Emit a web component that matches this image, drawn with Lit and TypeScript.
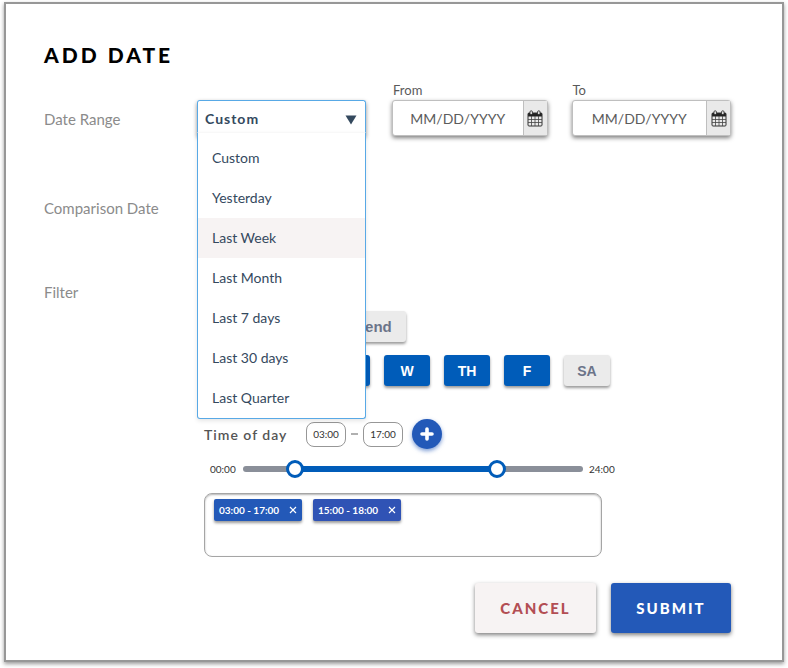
import { LitElement, html, css } from "lit";
import { customElement, state } from "lit/decorators.js";
import { classMap } from "lit/directives/class-map.js";
import { styleMap } from "lit/directives/style-map.js";

const RANGES = ["Custom", "Yesterday", "Last Week", "Last Month", "Last 7 days", "Last 30 days", "Last Quarter"];
const DAYS = ["S", "M", "T", "W", "TH", "F", "SA"];
const DAY_MINUTES = 1440;

const calendarIcon = html`<svg class="calendar" viewBox="0 0 16 17" aria-hidden="true">
  <path d="M1 3h14v3.5H1z" fill="#222" />
  <rect x="1" y="3" width="14" height="13" rx="1" fill="none" stroke="#333" />
  <path d="M1 9.5h14M1 12.5h14M4.5 6v10M8 6v10M11.5 6v10" stroke="#444" fill="none" stroke-width=".8" />
  <rect x="3" y=".8" width="2.4" height="3.8" rx="1.1" fill="#eee" stroke="#222" stroke-width=".8" />
  <rect x="10.6" y=".8" width="2.4" height="3.8" rx="1.1" fill="#eee" stroke="#222" stroke-width=".8" />
</svg>`;

@customElement("app-root")
export class AppRoot extends LitElement {
  @state() private range = "Custom";
  @state() private highlighted = "Last Week";
  @state() private open = true;
  @state() private activeDays = new Set(["M", "T", "W", "TH", "F"]);
  @state() private from = 192;
  @state() private to = 1096;
  @state() private slots = ["03:00 - 17:00", "15:00 - 18:00"];

  static styles = css`
    :host {
      display: block;
      padding: 2px 4px 6px;
      background: #fff;
      font-family: Lato, "Open Sans", sans-serif;
      color: #4a4a4a;
    }
    * { box-sizing: border-box; }
    button, input, select { font: inherit; color: inherit; margin: 0; }
    button { border: 0; padding: 0; cursor: pointer; }
    .panel {
      border: 2px solid #979797;
      box-shadow: 0 2px 4px rgba(0, 0, 0, .4);
      padding: 38px 51px 27px 38px;
      background: #fff;
    }
    .title {
      margin: 0 0 14px;
      font-size: 21px;
      line-height: 26px;
      font-weight: 900;
      letter-spacing: 3px;
      color: #000;
    }
    .row { display: grid; grid-template-columns: 153px minmax(0, 1fr); }
    .label { font-size: 15px; line-height: 20px; color: #8b8b8b; }
    .range-row { min-height: 56px; }
    .range-row .label { padding-top: 27px; }
    .compare-row { padding-top: 60px; }
    .filter-row { padding-top: 64px; }
    .dates { display: flex; }
    .dropdown {
      position: relative;
      flex: 0 0 169px;
      height: 36px;
      margin: 18px 26px 0 0;
      border: 1px solid #58a9e6;
      border-bottom: 0;
      border-radius: 3px;
      box-shadow: 0 2px 4px rgba(0, 0, 0, .45);
    }
    .dropdown select {
      appearance: none;
      width: 100%;
      height: 34px;
      padding: 0 30px 0 7px;
      border: 0;
      border-radius: 3px;
      background: #fff;
      color: #34495e;
      font-size: 14px;
      font-weight: 700;
      letter-spacing: 1px;
      outline: 0;
    }
    .arrow {
      position: absolute;
      right: 8px;
      top: 14px;
      width: 12px;
      height: 10px;
      pointer-events: none;
    }
    .menu {
      position: absolute;
      z-index: 2;
      top: 31px;
      left: -1px;
      right: -1px;
      margin: 0;
      padding: 5px 0 0;
      list-style: none;
      background: #fff;
      border: 1px solid #58a9e6;
      border-top-color: #f8f8f8;
      border-radius: 0 0 3px 3px;
      box-shadow: 0 2px 4px rgba(0, 0, 0, .1);
    }
    .option {
      padding: 0 14px;
      font-size: 14px;
      line-height: 40px;
      color: #34495e;
      cursor: pointer;
    }
    .option.lit { background: #f7f3f3; }
    .date { display: flex; flex-direction: column; flex: 156 1 0; min-width: 0; }
    .date + .date { flex-grow: 160; margin-left: 24px; }
    .date label { padding-left: 1px; font-size: 13px; line-height: 16px; color: #5a5a5a; }
    .field {
      display: flex;
      height: 36px;
      margin-top: 2px;
      border: 1px solid #bfbfbf;
      border-radius: 3px;
      background: #fff;
      box-shadow: 0 2px 4px rgba(0, 0, 0, .5);
    }
    .field input {
      flex: 1;
      min-width: 0;
      border: 0;
      padding: 0;
      background: none;
      text-align: center;
      font-size: 14px;
      outline: 0;
    }
    .field input::placeholder { color: #5c5c5c; opacity: 1; }
    .pick {
      width: 24px;
      display: grid;
      place-items: center;
      border-left: 1px solid #bfbfbf;
      background: #e9e9e9;
    }
    .calendar { width: 16px; height: 17px; }
    .filters { padding-left: 7px; padding-top: 29px; }
    .buttons { display: flex; gap: 14px; }
    .toggle {
      width: 46px;
      height: 31px;
      border-radius: 3px;
      background: #ebebeb;
      color: #6b7489;
      font: 700 14px "Liberation Sans", Arial, sans-serif;
      box-shadow: 0 2px 3px rgba(0, 0, 0, .4);
    }
    .toggle.wide { width: 94px; font-size: 15px; }
    .toggle.on { background: #005cb9; color: #fff; }
    .toggle.covered { visibility: hidden; }
    .days { margin-top: 13px; }
    .time { display: flex; align-items: center; margin-top: 32px; height: 32px; }
    .time-title { width: 102px; font-size: 14px; font-weight: 600; letter-spacing: 1px; color: #555; }
    .clock {
      width: 40px;
      height: 25px;
      padding: 0;
      border: 1px solid #979797;
      border-radius: 8px;
      text-align: center;
      font-size: 10px;
      color: #333;
      background: #fff;
    }
    .dash { width: 7px; height: 2px; margin: 0 5px; background: #b0b0b0; }
    .add {
      width: 30px;
      height: 30px;
      margin-left: 9px;
      border-radius: 50%;
      display: grid;
      place-items: center;
      background: #2359b8;
      box-shadow: 0 2px 4px rgba(35, 89, 184, .6);
    }
    .add svg { width: 14px; height: 14px; }
    .slider { display: flex; align-items: center; margin-top: 10px; height: 18px; font-size: 10px; color: #333; }
    .bound { width: 33px; }
    .slider .bound:first-child { margin-left: 6px; }
    .slider .bound:last-child { margin-left: 6px; }
    .track { position: relative; flex: 0 1 340px; height: 18px; }
    .rail, .fill { position: absolute; top: 6px; height: 6px; }
    .rail { left: 0; right: 0; border-radius: 3px; background: #8a8f99; }
    .fill { background: #005cb9; }
    .thumb {
      appearance: none;
      position: absolute;
      inset: 0;
      width: 100%;
      height: 18px;
      background: none;
      pointer-events: none;
    }
    .thumb::-webkit-slider-thumb {
      appearance: none;
      width: 18px;
      height: 18px;
      border: 3px solid #005cb9;
      border-radius: 50%;
      background: #fff;
      pointer-events: auto;
    }
    .slots {
      display: flex;
      align-items: flex-start;
      gap: 11px;
      max-width: 398px;
      min-height: 64px;
      margin-top: 15px;
      padding: 5px 9px;
      border: 1px solid #a5a5a5;
      border-radius: 8px;
      box-shadow: inset 0 1px 2px rgba(0, 0, 0, .3);
    }
    .slot {
      display: flex;
      align-items: center;
      justify-content: space-between;
      width: 88px;
      height: 22px;
      padding: 0 5px;
      border-radius: 2px;
      background: #2359b8;
      color: #fff;
      font-size: 10px;
      font-weight: 700;
      white-space: nowrap;
      box-shadow: 0 2px 3px rgba(0, 0, 0, .4);
    }
    .slot:nth-child(2) { background: #3053b5; }
    .remove { display: grid; background: none; }
    .remove svg { width: 8px; height: 8px; }
    .actions { display: flex; justify-content: flex-end; gap: 15px; margin-top: 26px; }
    .action {
      width: 121px;
      height: 50px;
      border-radius: 3px;
      font-size: 15px;
      font-weight: 900;
      letter-spacing: 2px;
      box-shadow: 0 2px 4px rgba(0, 0, 0, .5);
    }
    .cancel { background: #f7f3f3; color: #b34e53; }
    .submit { width: 120px; background: #2359b8; color: #fff; }
  `;

  private choose(range: string) {
    this.range = range;
    this.highlighted = range;
    this.open = false;
  }

  private toggleDay(day: string) {
    const next = new Set(this.activeDays);
    next.has(day) ? next.delete(day) : next.add(day);
    this.activeDays = next;
  }

  private offset(minutes: number) {
    return `calc(9px + (100% - 18px) * ${minutes / DAY_MINUTES})`;
  }

  private dateField(id: string, label: string) {
    return html`<div class="date">
      <label for=${id}>${label}</label>
      <div class="field">
        <input id=${id} type="text" placeholder="MM/DD/YYYY" />
        <button class="pick" type="button" aria-label="Pick ${label} date">${calendarIcon}</button>
      </div>
    </div>`;
  }

  render() {
    return html`<form class="panel" @submit=${(e: Event) => e.preventDefault()}>
      <h1 class="title">ADD DATE</h1>
      <div class="row range-row">
        <label class="label" for="range">Date Range</label>
        <div class="dates">
          <div class="dropdown">
            <select id="range" @change=${(e: Event) => this.choose((e.target as HTMLSelectElement).value)}>
              ${RANGES.map((r) => html`<option ?selected=${r === this.range}>${r}</option>`)}
            </select>
            <svg class="arrow" viewBox="0 0 12 10" aria-hidden="true"><path d="M.5.5h11L6 9.5z" fill="#34495e" /></svg>
            ${this.open
              ? html`<ul class="menu" role="listbox" aria-label="Date Range">
                  ${RANGES.map(
                    (r) => html`<li
                      class=${classMap({ option: true, lit: r === this.highlighted })}
                      role="option"
                      aria-selected=${r === this.range}
                      @click=${() => this.choose(r)}
                    >${r}</li>`
                  )}
                </ul>`
              : null}
          </div>
          ${this.dateField("from", "From")} ${this.dateField("to", "To")}
        </div>
      </div>
      <div class="row compare-row"><span class="label">Comparison Date</span></div>
      <div class="row filter-row">
        <span class="label">Filter</span>
        <div class="filters">
          <div class="buttons">
            <button type="button" class=${classMap({ toggle: true, wide: true, on: true, covered: this.open })}>Weekday</button>
            <button type="button" class="toggle wide">Weekend</button>
          </div>
          <div class="buttons days">
            ${DAYS.map(
              (d, i) => html`<button
                type="button"
                class=${classMap({ toggle: true, on: this.activeDays.has(d), covered: this.open && i < 2 })}
                aria-pressed=${this.activeDays.has(d)}
                @click=${() => this.toggleDay(d)}
              >${d}</button>`
            )}
          </div>
          <div class="time">
            <span class="time-title">Time of day</span>
            <input class="clock" type="text" aria-label="Start time" value="03:00" />
            <span class="dash"></span>
            <input class="clock" type="text" aria-label="End time" value="17:00" />
            <button type="button" class="add" aria-label="Add time slot">
              <svg viewBox="0 0 14 14" aria-hidden="true"><path d="M7 2v10M2 7h10" stroke="#fff" stroke-width="3.6" stroke-linecap="round" /></svg>
            </button>
          </div>
          <div class="slider">
            <span class="bound">00:00</span>
            <div class="track">
              <div class="rail"></div>
              <div
                class="fill"
                style=${styleMap({ left: this.offset(this.from), right: `calc(100% - ${this.offset(this.to)})` })}
              ></div>
              <input class="thumb" type="range" aria-label="From time" min="0" max=${DAY_MINUTES} .value=${String(this.from)}
                @input=${(e: Event) => (this.from = +(e.target as HTMLInputElement).value)} />
              <input class="thumb" type="range" aria-label="To time" min="0" max=${DAY_MINUTES} .value=${String(this.to)}
                @input=${(e: Event) => (this.to = +(e.target as HTMLInputElement).value)} />
            </div>
            <span class="bound">24:00</span>
          </div>
          <div class="slots">
            ${this.slots.map(
              (s) => html`<div class="slot">
                <span>${s}</span>
                <button type="button" class="remove" aria-label="Remove ${s}"
                  @click=${() => (this.slots = this.slots.filter((x) => x !== s))}>
                  <svg viewBox="0 0 8 8" aria-hidden="true"><path d="M1 1l6 6M7 1L1 7" stroke="#fff" stroke-width="1.2" /></svg>
                </button>
              </div>`
            )}
          </div>
        </div>
      </div>
      <div class="actions">
        <button type="button" class="action cancel">CANCEL</button>
        <button type="submit" class="action submit">SUBMIT</button>
      </div>
    </form>`;
  }
}
